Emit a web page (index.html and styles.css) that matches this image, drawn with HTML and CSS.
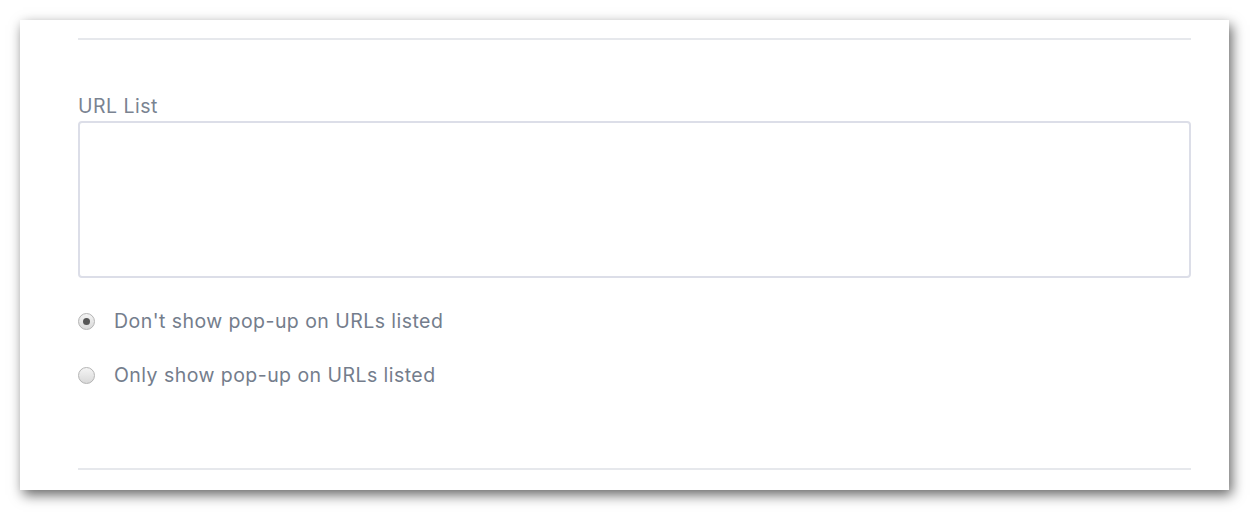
FILE: index.html
```html
<!doctype html>
<html lang="en">
<head>
    <meta charset="utf-8">
    <title>URL List</title>
    <link rel="stylesheet" href="styles.css">
</head>
<body>

    <div class="card">
        <div class="rule"></div>

        <div class="field">
            <label class="label" for="urls">URL List</label>
            <textarea id="urls" class="input"></textarea>
        </div>

        <div class="options">
            <label class="option">
                <input type="radio" name="mode" checked>
                <span class="dot"></span>
                Don't show pop-up on URLs listed
            </label>
            <label class="option">
                <input type="radio" name="mode">
                <span class="dot"></span>
                Only show pop-up on URLs listed
            </label>
        </div>

        <div class="rule"></div>
    </div>

</body>
</html>
```

FILE: styles.css
```css
html {
    width: 100%;
    height: 100%;
}

body {
    margin: 0;
    padding: 20px 0 22px 20px;
    font-family: 'Inter', 'Noto Sans', sans-serif;
    background-color: #fff;
    color: #747d8c;
}

.card {
    box-sizing: border-box;
    width: 1209px;
    height: 470px;
    padding: 18px 38px 0 58px;
    background-color: #fff;
    box-shadow: 3px 5px 12px rgba(0, 0, 0, 0.6);
}

.rule {
    height: 2px;
    background-color: #e6e8ec;
}

.field {
    padding-top: 54px;
}

.label {
    display: block;
    font-size: 19.5px;
    letter-spacing: 0.5px;
    line-height: 24px;
    margin-bottom: 3px;
    color: #7a8391;
}

.input {
    display: block;
    box-sizing: border-box;
    width: 100%;
    height: 157px;
    margin: 0;
    border: 2px solid #dcdee8;
    border-radius: 4px;
    resize: none;
    outline: none;
}

.options {
    display: flex;
    flex-direction: column;
    gap: 30px;
    padding: 31px 0 81px;
}

.option {
    display: flex;
    align-items: center;
    height: 24px;
    font-size: 19.5px;
    letter-spacing: 0.45px;
    color: #747d8c;
}

.option input {
    display: none;
}

.dot {
    box-sizing: border-box;
    position: relative;
    width: 17px;
    height: 17px;
    margin-right: 19px;
    border: 1px solid #b4b4b4;
    border-radius: 50%;
    background: linear-gradient(#f4f4f4, #d9d9d9);
}

.option input:checked + .dot::after {
    content: "";
    position: absolute;
    top: 4px;
    left: 4px;
    width: 7px;
    height: 7px;
    border-radius: 50%;
    background-color: #555;
}
```
